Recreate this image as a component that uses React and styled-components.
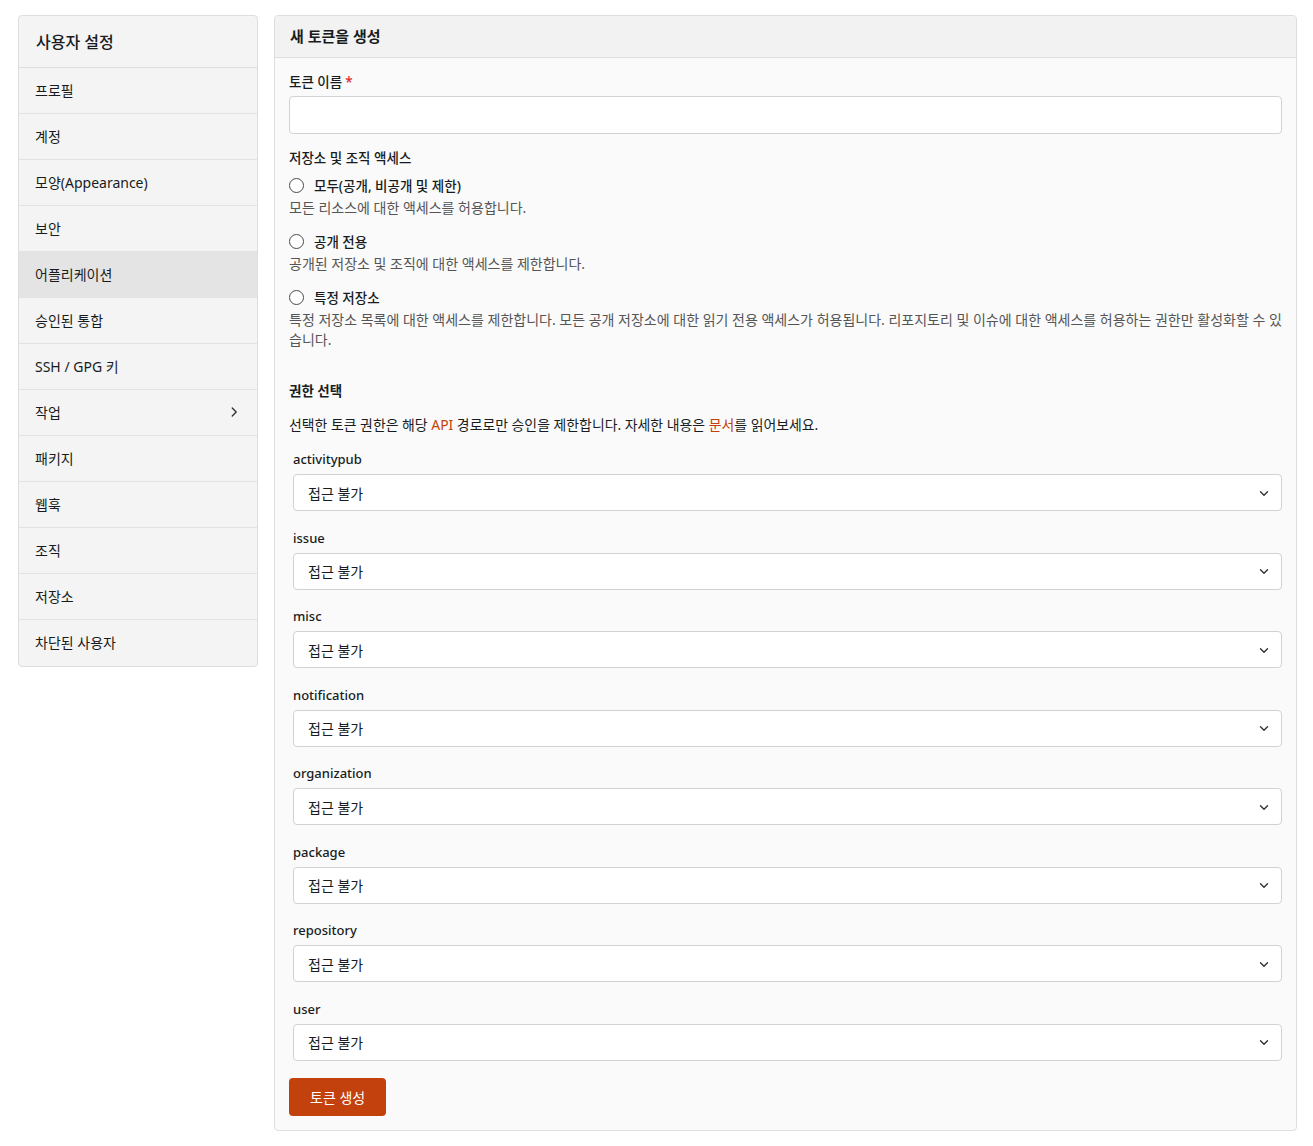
import styled, { createGlobalStyle } from 'styled-components';

const GlobalStyle = createGlobalStyle`
  body {
    margin: 0;
    background: #fff;
    font-family: "Noto Sans", "Noto Sans CJK KR", sans-serif;
    font-size: 14px;
    color: #181c21;
  }
  * { box-sizing: border-box; }
`;

const Page = styled.div`
  display: flex;
  align-items: flex-start;
  gap: 16px;
  padding: 15px 16px 15px 18px;
`;

const Sidebar = styled.nav`
  width: 240px;
  flex-shrink: 0;
  background: #f4f4f4;
  border: 1px solid #dedede;
  border-radius: 4px;
  overflow: hidden;
`;

const SideHeader = styled.div`
  height: 52px;
  padding: 0 17px 2px;
  display: flex;
  align-items: center;
  font-size: 16px;
  font-weight: 500;
  border-bottom: 1px solid #dedede;
`;

const SideItem = styled.div`
  height: 46px;
  padding: 0 16px 2px;
  display: flex;
  align-items: center;
  justify-content: space-between;
  background: ${(p) => (p.$active ? '#e4e4e4' : 'transparent')};
  border-bottom: ${(p) => (p.$last ? 'none' : '1px solid #e2e2e2')};
`;

const Panel = styled.section`
  flex: 1;
  background: #fafafa;
  border: 1px solid #dedede;
  border-radius: 4px;
  overflow: hidden;
`;

const PanelHeader = styled.div`
  height: 42px;
  padding: 0 15px 3px;
  display: flex;
  align-items: center;
  background: #f2f2f2;
  border-bottom: 1px solid #dedede;
  font-size: 15px;
  font-weight: 600;
`;

const PanelBody = styled.div`
  padding: 13px 14px 14px 14px;
`;

const Label = styled.div`
  font-size: 13.5px;
  font-weight: ${(p) => (p.$bold ? 600 : 500)};
  margin-bottom: 5px;
`;

const Required = styled.span`
  color: #db2828;
  margin-left: 3px;
`;

const TextInput = styled.input`
  display: block;
  width: 100%;
  height: 38px;
  border: 1px solid #d2d2d2;
  border-radius: 4px;
  background: #fff;
  margin-bottom: 13px;
`;

const RadioRow = styled.label`
  display: flex;
  align-items: center;
  gap: 10px;
  font-weight: 500;
  font-size: 13.5px;
  margin-bottom: 3px;
`;

const RadioCircle = styled.span`
  width: 15px;
  height: 15px;
  border: 1px solid #4a4a4a;
  border-radius: 50%;
  background: #fff;
`;

const Help = styled.div`
  color: #555;
  font-size: 14px;
  line-height: 20px;
  margin-bottom: ${(p) => p.$mb || '13px'};
`;

const Option = styled.div`
  margin-top: 8px;
`;

const Intro = styled.p`
  margin: 14px 0 16px;
  font-size: 13.9px;
`;

const Link = styled.span`
  color: #c2410c;
`;

const Field = styled.div`
  padding: 0 0 0 4px;
  margin-bottom: 17.5px;
`;

const FieldLabel = styled.div`
  font-size: 13px;
  font-weight: 500;
  margin-bottom: 6px;
`;

const Select = styled.div`
  height: 37px;
  border: 1px solid #d2d2d2;
  border-radius: 4px;
  background: #fff;
  display: flex;
  align-items: center;
  justify-content: space-between;
  padding: 0 10px 0 14px;
  font-size: 14px;
`;

const Button = styled.button`
  height: 38px;
  padding: 0 21px;
  border: none;
  border-radius: 4px;
  background: #c2410c;
  color: #fff;
  font-family: inherit;
  font-size: 14px;
`;

const menu = ['프로필', '계정', '모양(Appearance)', '보안', '어플리케이션', '승인된 통합', 'SSH / GPG 키', '작업', '패키지', '웹훅', '조직', '저장소', '차단된 사용자'];
const scopes = ['activitypub', 'issue', 'misc', 'notification', 'organization', 'package', 'repository', 'user'];

const Chevron = ({ dir = 'right' }) => (
  <svg width="14" height="14" viewBox="0 0 16 16" fill="none" stroke="#333" strokeWidth="1.6" strokeLinecap="round" strokeLinejoin="round">
    {dir === 'right' ? <path d="M6 3.5 10.5 8 6 12.5" /> : <path d="M4 6.5 8 10.5 12 6.5" />}
  </svg>
);

export default function App() {
  return (
    <Page>
      <GlobalStyle />
      <Sidebar>
        <SideHeader>사용자 설정</SideHeader>
        {menu.map((m, i) => (
          <SideItem key={m} $active={m === '어플리케이션'} $last={i === menu.length - 1}>
            {m}
            {m === '작업' && <Chevron />}
          </SideItem>
        ))}
      </Sidebar>
      <Panel>
        <PanelHeader>새 토큰을 생성</PanelHeader>
        <PanelBody>
          <Label>
            토큰 이름<Required>*</Required>
          </Label>
          <TextInput />
          <Label>저장소 및 조직 액세스</Label>
          <Option>
            <RadioRow>
              <RadioCircle />
              모두(공개, 비공개 및 제한)
            </RadioRow>
            <Help>모든 리소스에 대한 액세스를 허용합니다.</Help>
          </Option>
          <Option>
            <RadioRow>
              <RadioCircle />
              공개 전용
            </RadioRow>
            <Help>공개된 저장소 및 조직에 대한 액세스를 제한합니다.</Help>
          </Option>
          <Option>
            <RadioRow>
              <RadioCircle />
              특정 저장소
            </RadioRow>
            <Help $mb="30px">
              특정 저장소 목록에 대한 액세스를 제한합니다. 모든 공개 저장소에 대한 읽기 전용 액세스가 허용됩니다. 리포지토리 및 이슈에 대한 액세스를 허용하는 권한만 활성화할 수 있습니다.
            </Help>
          </Option>
          <Label $bold>권한 선택</Label>
          <Intro>
            선택한 토큰 권한은 해당 <Link>API</Link> 경로로만 승인을 제한합니다. 자세한 내용은 <Link>문서</Link>를 읽어보세요.
          </Intro>
          {scopes.map((s) => (
            <Field key={s}>
              <FieldLabel>{s}</FieldLabel>
              <Select>
                접근 불가
                <Chevron dir="down" />
              </Select>
            </Field>
          ))}
          <Button>토큰 생성</Button>
        </PanelBody>
      </Panel>
    </Page>
  );
}
